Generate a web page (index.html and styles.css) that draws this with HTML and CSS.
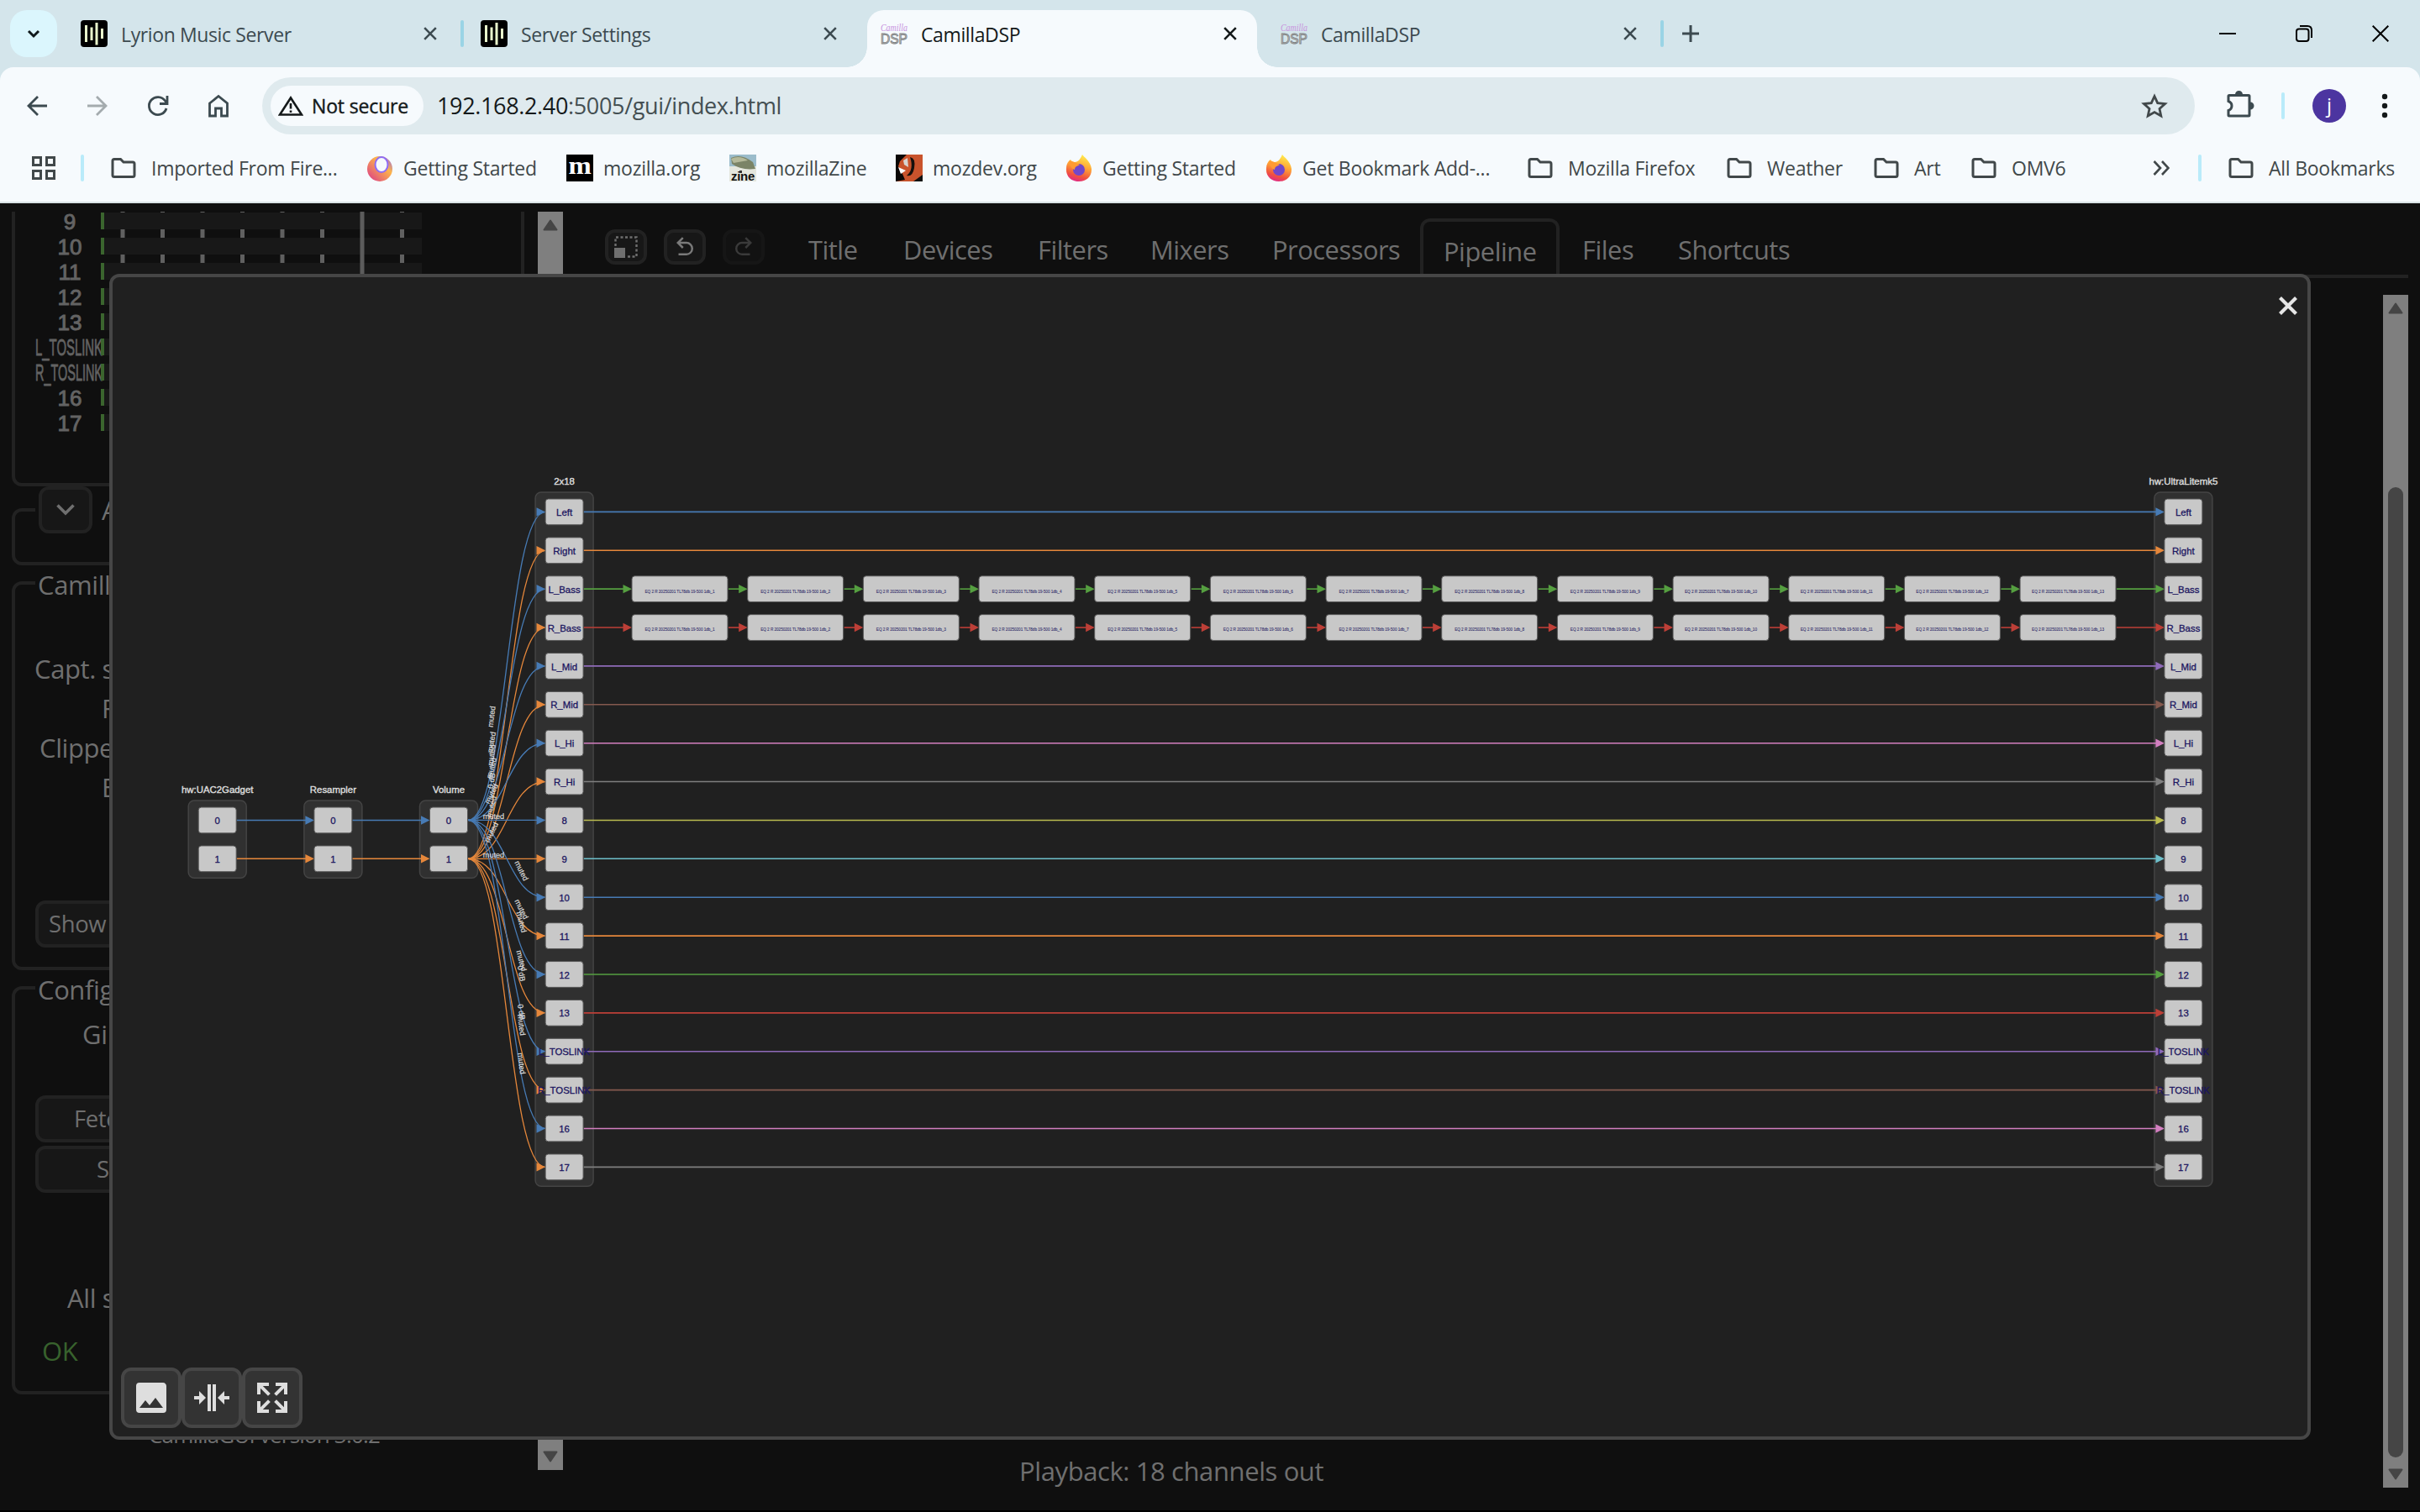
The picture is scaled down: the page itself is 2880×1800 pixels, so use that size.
FILE: index.html
```html
<!DOCTYPE html>
<html lang="en">
<head>
<meta charset="utf-8">
<title>CamillaDSP</title>
<link rel="stylesheet" href="styles.css">
</head>
<body>
<svg class="defs" aria-hidden="true">
  <symbol id="folder" viewBox="0 0 32 32"><path d="M3 7.500Q3 5.500 5 5.500H12.500L16 9H27Q29 9 29 11V24.500Q29 26.500 27 26.500H5Q3 26.500 3 24.500Z" fill="none" stroke="#41484a" stroke-width="3"/></symbol>
  <symbol id="close" viewBox="0 0 16 16"><path d="M1.200 1.200L14.800 14.800M14.800 1.200L1.200 14.800" fill="none" stroke="currentColor" stroke-width="2.600"/></symbol>
  <symbol id="lyrion" viewBox="0 0 32 32"><rect width="32" height="32" rx="4" fill="#000"/><path d="M6.500 6V26M13 8.500V24M19 3V29.500M25.500 10V22" stroke="#e8f5cb" stroke-width="3"/></symbol>
  <symbol id="firefox" viewBox="0 0 32 32"><path d="M20 0C22 3 30 8 31 17C31.500 26 25 32 16 32C7 32 0 26 1 16C1 12 3 8 6 6C7 8 9 9 11 9C15 9 18 5 20 0Z" fill="url(#fx)"/><circle cx="16" cy="18" r="7" fill="#7247c9"/><path d="M4 8C8 7 12 10 17 12C14 14 11 14 11 18C9 18 5 14 4 8Z" fill="#ff9b32"/></symbol>
  <linearGradient id="fx" x1=".7" y1="0" x2=".4" y2="1"><stop offset="0" stop-color="#fff04e"/><stop offset=".45" stop-color="#ffa436"/><stop offset=".8" stop-color="#f0503f"/><stop offset="1" stop-color="#e02b84"/></linearGradient>
  <linearGradient id="ring" x1="1" y1="0" x2="0" y2="1"><stop offset="0" stop-color="#8b5cf0"/><stop offset=".35" stop-color="#fdb54a"/><stop offset="1" stop-color="#d9348c"/></linearGradient>
</svg>

<header class="browser">
  <div class="tabstrip">
    <div class="tabsearch"><svg width="16" height="12" viewBox="0 0 16 12"><path d="M2 3L8 9L14 3" fill="none" stroke="#10191b" stroke-width="3"/></svg></div>
    <div class="tab first"><svg class="fav"><use href="#lyrion"/></svg><span>Lyrion Music Server</span><svg class="x"><use href="#close"/></svg></div>
    <i class="sep"></i>
    <div class="tab second"><svg class="fav"><use href="#lyrion"/></svg><span>Server Settings</span><svg class="x"><use href="#close"/></svg></div>
    <div class="tab active"><svg class="fav dsp" viewBox="0 0 32 32"><text class="script" x="0" y="12.500" textLength="32" lengthAdjust="spacingAndGlyphs">Camilla</text><text class="caps" x="0" y="28" textLength="32" lengthAdjust="spacingAndGlyphs">DSP</text></svg><span>CamillaDSP</span><svg class="x"><use href="#close"/></svg></div>
    <div class="tab fourth"><svg class="fav dsp" viewBox="0 0 32 32"><text class="script" x="0" y="12.500" textLength="32" lengthAdjust="spacingAndGlyphs">Camilla</text><text class="caps" x="0" y="28" textLength="32" lengthAdjust="spacingAndGlyphs">DSP</text></svg><span>CamillaDSP</span><svg class="x"><use href="#close"/></svg></div>
    <i class="sep"></i>
    <svg class="plus" width="22" height="22" viewBox="0 0 22 22"><path d="M11 1V21M1 11H21" stroke="#3c4a50" stroke-width="3"/></svg>
    <div class="winctl">
      <svg width="20" height="20" viewBox="0 0 20 20"><path d="M0 10H20" stroke="#000" stroke-width="2"/></svg>
      <svg width="20" height="20" viewBox="0 0 20 20"><rect x="1" y="4.500" width="14.500" height="14.500" rx="3" fill="none" stroke="#000" stroke-width="2"/><path d="M5 1H14Q19 1 19 6V15" fill="none" stroke="#000" stroke-width="2"/></svg>
      <svg width="20" height="20" viewBox="0 0 20 20"><path d="M.7 .7L19.300 19.300M19.300 .7L.7 19.300" stroke="#000" stroke-width="2"/></svg>
    </div>
  </div>

  <div class="toolbar">
    <div class="nav-icons">
      <svg viewBox="0 0 24 24"><path d="M24 12H2M13 1L2 12L13 23" fill="none" stroke="#3c4a50" stroke-width="2.800"/></svg>
      <svg viewBox="0 0 24 24"><path d="M0 12H22M11 1L22 12L11 23" fill="none" stroke="#a4abae" stroke-width="2.800"/></svg>
      <svg viewBox="0 0 24 24"><path d="M22 15A10.500 10.500 0 1 1 20.500 6L22.500 9M23 0V9.500H14" fill="none" stroke="#3c4a50" stroke-width="2.800"/></svg>
      <svg viewBox="0 0 24 26"><path d="M1.500 10L12 1.500L22.500 10V25H15.500V16H8.500V25H1.500Z" fill="none" stroke="#3c4a50" stroke-width="2.800"/></svg>
    </div>
    <div class="omnibox">
      <div class="chip"><svg width="30" height="24" viewBox="0 0 30 24"><path d="M15 2.500L28 22.500H2Z" fill="none" stroke="#14191a" stroke-width="2.600"/><path d="M15 9V15.500M15 17.500V20" stroke="#14191a" stroke-width="2.600"/></svg><span>Not secure</span></div>
      <div class="url"><b>192.168.2.40</b>:5005/gui/index.html</div>
      <svg class="star" width="32" height="30" viewBox="0 0 32 30"><path d="M16 3.500L19.700 11.600L28.600 12.600L22 18.500L23.800 27L16 22.600L8.200 27L10 18.500L3.400 12.600L12.300 11.600Z" fill="none" stroke="#41484a" stroke-width="2.800"/></svg>
    </div>
    <svg class="puzzle" width="34" height="32" viewBox="0 0 34 32"><path d="M3 6.500Q3 5.500 4 5.500H27Q28 5.500 28 6.500V29Q28 30 27 30H4Q3 30 3 29V23.500Q7 22 7 18Q7 14 3 12.500Z" fill="none" stroke="#3c4a50" stroke-width="3"/><path d="M11 4.500A4.500 4.500 0 0 1 20 4.500ZM29 13.500A4.500 4.500 0 0 1 29 22.500Z" fill="#3c4a50"/></svg>
    <i class="sep light"></i>
    <div class="avatar">j</div>
    <svg class="dots" width="8" height="30" viewBox="0 0 8 30"><g fill="#14191a"><circle cx="4" cy="4" r="3.200"/><circle cx="4" cy="15" r="3.200"/><circle cx="4" cy="26" r="3.200"/></g></svg>
  </div>

  <div class="bookmarks">
    <svg class="apps" viewBox="0 0 28 28"><path d="M1.500 1.500H10.500V10.500H1.500ZM17.500 1.500H26.500V10.500H17.500ZM1.500 17.500H10.500V26.500H1.500ZM17.500 17.500H26.500V26.500H17.500Z" fill="none" stroke="#41484a" stroke-width="3"/></svg>
    <i class="sep light"></i>
    <div><svg class="fav"><use href="#folder"/></svg>Imported From Fire...</div>
    <div><svg class="fav" viewBox="0 0 32 32"><ellipse cx="16" cy="17" rx="15" ry="15" fill="url(#ring)"/><ellipse cx="18" cy="12" rx="7.500" ry="9" fill="#f6fafd" stroke="#8f6cf5" stroke-width="2"/></svg>Getting Started</div>
    <div><svg class="fav open" viewBox="0 0 32 32"><rect width="32" height="32"/><text x="2.500" y="23" textLength="27" lengthAdjust="spacingAndGlyphs" font-family="Liberation Serif, serif" font-weight="bold" font-size="30" fill="#fff">m</text></svg>mozilla.org</div>
    <div><svg class="fav open" viewBox="0 0 32 32"><rect width="32" height="19" fill="#9bbccb"/><rect y="14" width="32" height="18" fill="#e4e6dd"/><path d="M2 4Q14 -2 28 9L31 17Q14 19 3 11Z" fill="#7b8467"/><path d="M2 5Q12 0 22 7L5 10Z" fill="#b4b99a"/><path d="M12 19H15V22H12Z" fill="#333"/><text x="2" y="31" textLength="28" lengthAdjust="spacingAndGlyphs" font-family="Liberation Sans, sans-serif" font-weight="bold" font-size="14" fill="#111">zine</text></svg>mozillaZine</div>
    <div><svg class="fav" viewBox="0 0 32 32"><rect width="32" height="32" fill="#c9532c"/><path d="M0 0H13L5 8L3 14L8 23L11 30L0 32Z" fill="#0b0706"/><path d="M17 3Q24 4 22 16Q20 27 13 25Q22 18 17 3Z" fill="#16100d"/><path d="M9 7L14 4L15 15L10 12Z" fill="#d8d4d0"/><path d="M3 15L12 19L6 23Z" fill="#fff"/><path d="M32 24L21 32H32Z" fill="#111"/></svg>mozdev.org</div>
    <div><svg class="fav"><use href="#firefox"/></svg>Getting Started</div>
    <div><svg class="fav"><use href="#firefox"/></svg>Get Bookmark Add-...</div>
    <div><svg class="fav"><use href="#folder"/></svg>Mozilla Firefox</div>
    <div><svg class="fav"><use href="#folder"/></svg>Weather</div>
    <div><svg class="fav"><use href="#folder"/></svg>Art</div>
    <div><svg class="fav"><use href="#folder"/></svg>OMV6</div>
    <svg class="more" viewBox="0 0 20 18"><path d="M1.500 1L9 9L1.500 17M11 1L18.500 9L11 17" fill="none" stroke="#41484a" stroke-width="2.600"/></svg>
    <i class="sep light"></i>
    <div><svg class="fav"><use href="#folder"/></svg>All Bookmarks</div>
  </div>
</header>

<main class="app">
  <aside class="side">
    <section class="panel levels"><svg id="meter" width="580" height="322" viewBox="18 252 580 322"></svg></section>
    <section class="panel shortcuts"><div class="legend"><button><svg width="22" height="14" viewBox="0 0 22 14"><path d="M1.500 1.500L11 11L20.500 1.500" fill="none" stroke="#6f6f6f" stroke-width="3.600"/></svg></button><span>A</span></div></section>
    <section class="panel status">
      <div class="legend">Camill</div>
      <p class="l1">Capt. s</p><p class="l2">F</p><p class="l3">Clippe</p><p class="l2">B</p>
      <button>Show</button>
    </section>
    <section class="panel config">
      <div class="legend">Config</div>
      <p class="git">Gi</p>
      <button class="fetch">Fetc</button>
      <button class="send">S</button>
      <p class="all">All s</p>
      <p class="ok">OK</p>
    </section>
    <footer>CamillaGUI version 3.0.2</footer>
  </aside>
  <div class="scroll left">
    <svg width="18" height="14" viewBox="0 0 18 14"><path d="M9 1.500L16.500 12.500H1.500Z" fill="#454545" stroke="#454545" stroke-width="2" stroke-linejoin="round"/></svg>
    <svg width="18" height="14" viewBox="0 0 18 14"><path d="M9 12.500L16.500 1.500H1.500Z" fill="#454545" stroke="#454545" stroke-width="2" stroke-linejoin="round"/></svg>
  </div>
  <div class="work">
    <nav>
      <button><svg width="28" height="26" viewBox="0 0 28 26"><path d="M1.500 12V1.500H26.500V24.500H15" fill="none" stroke="#6f6f6f" stroke-width="2.400" stroke-dasharray="3 2.500"/><rect x="0" y="14" width="13" height="12" fill="#6f6f6f"/></svg></button>
      <button><svg width="30" height="30" viewBox="0 0 24 24"><path fill="#7a7a7a" d="M13.500,7A6.500,6.500 0 0,1 20,13.500A6.500,6.500 0 0,1 13.500,20H6V18H13.500C16,18 18,16 18,13.500C18,11 16,9 13.500,9H7.830L10.910,12.090L9.500,13.500L4,8L9.500,2.500L10.920,3.910L7.830,7H13.500Z"/></svg></button>
      <button class="off"><svg width="30" height="30" viewBox="0 0 24 24"><path fill="#7a7a7a" d="M10.500,7A6.500,6.500 0 0,0 4,13.500A6.500,6.500 0 0,0 10.500,20H18V18H10.500C8,18 6,16 6,13.500C6,11 8,9 10.500,9H16.170L13.090,12.090L14.500,13.500L20,8L14.500,2.500L13.080,3.910L16.170,7H10.500Z"/></svg></button>
      <span>Title</span><span>Devices</span><span>Filters</span><span>Mixers</span><span>Processors</span><span class="current">Pipeline</span><span>Files</span><span>Shortcuts</span>
    </nav>
    <div class="pipeline-pane">
      <p>Playback: 18 channels out</p>
      <div class="scroll right">
        <svg width="18" height="14" viewBox="0 0 18 14"><path d="M9 1.500L16.500 12.500H1.500Z" fill="#454545" stroke="#454545" stroke-width="2" stroke-linejoin="round"/></svg>
        <div class="thumb"></div>
        <svg width="18" height="14" viewBox="0 0 18 14"><path d="M9 12.500L16.500 1.500H1.500Z" fill="#454545" stroke="#454545" stroke-width="2" stroke-linejoin="round"/></svg>
      </div>
    </div>
  </div>
</main>

<div class="dialog">
  <svg id="graph" width="2612" height="1380" viewBox="134 330 2612 1380"></svg>
  <svg class="dismiss" width="24" height="24" viewBox="0 0 24 24"><path d="M2.500 2.500L21.500 21.500M21.500 2.500L2.500 21.500" stroke="#e6e6e6" stroke-width="4.200"/></svg>
  <div class="tools">
    <button><svg width="48" height="48" viewBox="0 0 24 24"><path fill="#dedede" d="M8.500,13.500L11,16.500L14.500,12L19,18H5M21,19V5C21,3.890 20.100,3 19,3H5A2,2 0 0,0 3,5V19A2,2 0 0,0 5,21H19A2,2 0 0,0 21,19Z"/></svg></button>
    <button><svg width="48" height="48" viewBox="0 0 48 48"><path fill="#dedede" d="M19 8H23V40H19ZM25 8H29V40H25ZM3 22H9V16L17 24L9 32V26H3ZM45 22H39V16L31 24L39 32V26H45Z"/></svg></button>
    <button><svg width="48" height="48" viewBox="0 0 24 24"><path fill="#dedede" d="M9.500,13.090L10.910,14.500L6.410,19H10V21H3V14H5V17.590L9.500,13.090M10.910,9.500L9.500,10.910L5,6.410V10H3V3H10V5H6.410L10.910,9.500M14.500,13.090L19,17.590V14H21V21H14V19H17.590L13.090,14.500L14.500,13.090M13.090,9.500L17.590,5H14V3H21V10H19V6.410L14.500,10.910L13.090,9.500Z"/></svg></button>
  </div>
</div>
<script src="graph.js"></script>
</body>
</html>
```
FILE: styles.css
```css
* { box-sizing: border-box; }
html, body { height: 1800px; }
body { margin: 0; width: 2880px; overflow: hidden; background: #000; font-family: "Open Sans", "Noto Sans", sans-serif; display: flex; flex-direction: column; position: relative; }
svg { display: block; flex: none; }
p { margin: 0; }
button { font: inherit; letter-spacing: inherit; color: inherit; margin: 0; padding: 0; }
.defs { position: absolute; width: 0; height: 0; }

.browser { height: 242px; background: #d4e5eb; border-bottom: 2px solid #d9e3e5; flex: none; }
.fav { width: 32px; height: 32px; }
.fav.open, .dsp { overflow: visible; }
.dsp { letter-spacing: 0; }
.dsp .script { font: italic 13px "Liberation Serif", serif; fill: #c893dd; }
.dsp .caps { font: 17px "Liberation Sans", sans-serif; fill: #e9e9e9; stroke: #7f8283; stroke-width: 1px; }
.sep { width: 4px; height: 32px; background: #9ad4e5; border-radius: 2px; flex: none; }
.sep.light { background: #b9ebfa; }

.tabstrip { height: 80px; display: flex; align-items: center; padding-left: 12px; font-size: 23px; letter-spacing: -.38px; color: #3c4a50; }
.tabsearch { width: 56px; height: 56px; border-radius: 20px; background: #dbf6fd; display: flex; align-items: center; justify-content: center; }
.tab { height: 56px; display: flex; align-items: center; flex: none; }
.tab span { flex: 1; padding-left: 16px; padding-top: 2px; }
.tab .x { width: 16px; height: 16px; }
.tab.first { width: 424px; margin-left: 28px; margin-right: 28px; }
.tab.second { width: 424px; margin-left: 20px; margin-right: 36px; }
.tab.active { width: 464px; height: 68px; align-self: flex-end; background: #f6fafd; border-radius: 20px 20px 0 0; padding: 0 24px 12px 16px; color: #14191a; position: relative; }
.tab.active::before, .tab.active::after { content: ""; position: absolute; bottom: 0; width: 24px; height: 24px; }
.tab.active::before { left: -24px; background: radial-gradient(circle at 0 0, #d4e5eb 23.5px, #f6fafd 24px); }
.tab.active::after { right: -24px; background: radial-gradient(circle at 100% 0, #d4e5eb 23.5px, #f6fafd 24px); }
.tab.fourth { width: 424px; margin-left: 28px; margin-right: 28px; }
.plus { margin-left: 21px; }
.winctl { margin-left: auto; margin-right: 37px; display: flex; gap: 71px; }

.toolbar { height: 80px; background: #f6fafd; border-radius: 16px 16px 0 0; display: flex; align-items: center; padding: 12px 0 0 32px; }
.nav-icons { display: flex; gap: 48px; width: 280px; }
.nav-icons svg { width: 24px; height: 26px; overflow: visible; }
.omnibox { width: 2300px; height: 68px; border-radius: 34px; background: #dfeaee; display: flex; align-items: center; padding: 0 32px 0 10px; }
.chip { width: 182px; height: 48px; border-radius: 24px; background: #f6fafd; display: flex; align-items: center; gap: 10px; padding-left: 9px; padding-bottom: 1px; font-size: 23px; letter-spacing: -.15px; color: #14191a; -webkit-text-stroke: .4px #14191a; white-space: nowrap; }
.url { flex: 1; padding-left: 16px; padding-bottom: 1px; font-size: 27px; letter-spacing: -.35px; color: #444f52; }
.url b { font-weight: 400; color: #14191a; }
.puzzle { margin: -4px 32px 0 37px; }
.avatar { width: 40px; height: 40px; margin: 0 0 0 33px; border-radius: 50%; background: #4c35a0; color: #fff; font-size: 24px; line-height: 37px; text-align: center; }
.dots { margin-left: 42px; }

.bookmarks { height: 80px; background: #f6fafd; display: grid; align-items: center; color: #41484a; font-size: 23px; letter-spacing: -.25px; white-space: nowrap; padding-left: 38px;
  grid-template-columns: 58px 36px 304px 238px 194px 198px 202px 238px 312px 237px 175px 116px 216px 54px 36px 200px; }
.bookmarks > div { display: flex; align-items: center; gap: 12px; }
.bookmarks > div:nth-child(n+10), .bookmarks > div:nth-child(3) { gap: 17px; margin-left: -1px; }
.apps { width: 28px; height: 28px; }
.more { width: 20px; height: 18px; }

.app { height: 1556px; background: #0f0f0f; color: #6f6f6f; display: flex; padding: 10px 14px 0; font-size: 31px; letter-spacing: -.4px; line-height: 46px; flex: none; }
.side { width: 610px; display: flex; flex-direction: column; flex: none; }
.panel { border: 4px solid #222; border-radius: 12px; position: relative; flex: none; }
.panel button, nav button { border: 4px solid #222; border-radius: 12px; background: #171717; }
.legend { position: absolute; left: 24px; top: -22px; padding: 0 5px 0 3px; background: #0f0f0f; line-height: 44px; }
.levels { height: 327px; border-top: 0; border-radius: 0 0 12px 12px; }
.levels svg { width: 580px; }
.shortcuts { height: 68px; margin-top: 26px; }
.shortcuts .legend { top: -30px; display: flex; align-items: center; gap: 11px; padding-left: 4px; height: 56px; }
.shortcuts .legend button { width: 64px; height: 56px; display: flex; align-items: center; justify-content: center; }
.status { height: 463px; margin-top: 19px; padding: 77px 24px 0 23px; }
.status p { height: 47px; }
.status .l1 { padding-left: 0; }
.status .l2 { padding-left: 80px; }
.status .l3 { padding-left: 6px; }
.panel > button { display: block; width: 520px; height: 56px; text-align: left; font-size: 27.500px; line-height: 44px; padding-left: 13px; }
.status > button { margin-left: 1px; padding-left: 12px; margin-top: 111px; }
.config { height: 486px; margin-top: 19px; padding: 30px 24px 0; }
.config .git { padding-left: 56px; height: 96px; }
.config > .fetch { padding-left: 42px; }
.config > .send { margin-top: 4px; padding-left: 69px; }
.config .all { padding: 102px 0 0 38px; }
.config .ok { padding: 17px 0 0 8px; color: #38622d; }
.side footer { padding: 28px 0 0 163px; line-height: 40px; font-size: 26px; letter-spacing: -.82px; }

.scroll { width: 30px; background: #7f7f7f; display: flex; flex-direction: column; align-items: center; justify-content: space-between; flex: none; }
.scroll.left { margin-left: 16px; height: 1498px; padding: 9px 0; }
.work { flex: 1; padding-left: 50px; display: flex; flex-direction: column; }
nav { height: 79px; display: grid; align-items: start; padding-top: 8px; white-space: nowrap; border-bottom: 4px solid #222; font-size: 30.800px; letter-spacing: -.45px;
  grid-template-columns: 70px 70px 102px 113px 160px 134px 145px 176px 193px 114px 150px; }
nav button { width: 50px; height: 42px; margin-top: 13px; display: flex; align-items: center; justify-content: center; }
nav button.off { opacity: .4; }
nav span { padding-top: 14px; }
nav .current { padding: 12px 0 0 24px; width: 166px; height: 71px; border: 4px solid #222; border-bottom: 0; border-radius: 12px 12px 0 0; }
.pipeline-pane { height: 1459px; display: flex; justify-content: space-between; padding-top: 20px; padding-left: 493px; }
.pipeline-pane p { align-self: flex-end; padding-bottom: 16px; }
.scroll.right { height: 1420px; padding: 9px 0; }
.thumb { width: 18px; height: 1155px; margin-top: auto; margin-bottom: 13px; border-radius: 9px; background: #454545; }

.dialog { position: absolute; left: 130px; top: 326px; width: 2620px; height: 1388px; border: 4px solid #464646; border-radius: 12px; background: #202020; overflow: hidden; }
.dismiss { position: absolute; right: 11px; top: 22px; }
.tools { position: absolute; left: 10px; bottom: 10px; display: flex; }
.tools button { width: 72px; height: 72px; border: 4px solid #464646; border-radius: 12px; background: #333; display: flex; align-items: center; justify-content: center; }
#graph { font-family: "Liberation Sans", Arial, sans-serif; font-size: 11.400px; }
#graph .heading { fill: #dcdcdc; stroke: #dcdcdc; stroke-width: .4px; }
#graph .group { fill: #303030; stroke: #444; stroke-width: 1.500px; }
#graph .node { fill: #c8c8c8; stroke: #555; stroke-width: 1px; }
#graph .name { fill: #1b1560; stroke: #1b1560; stroke-width: .3px; }
#graph .filter { fill: #3a3670; font-size: 4.700px; stroke: #3a3670; stroke-width: .1px; }
#graph .gain { fill: #dcdcdc; stroke: #dcdcdc; stroke-width: .2px; font-size: 9.100px; }
#meter { font-family: "Liberation Sans", Arial, sans-serif; font-size: 26px; letter-spacing: 0; }
```
FILE: graph.js
```javascript
const NS = 'http://www.w3.org/2000/svg';
function add(parent, tag, attrs, text) {
  const el = document.createElementNS(NS, tag);
  for (const k in attrs) el.setAttribute(k, attrs[k]);
  if (text !== undefined) el.textContent = text;
  parent.appendChild(el);
  return el;
}

// Level meter rows
const meter = document.getElementById('meter');
const ticks = [146, 193.5, 241, 288.5, 336, 383.5, 478.5];
const channels = ['9', '10', '11', '12', '13', 'L_TOSLINK', 'R_TOSLINK', '16', '17'];
ticks.forEach(x => add(meter, 'rect', { x: x - 2.5, y: 252, width: 5, height: 260, fill: '#606060' }));
channels.forEach((name, i) => {
  const y = 253 + i * 30;
  add(meter, 'rect', { x: 120, y, width: 382, height: 20, fill: '#181818' });
  const long = name.length > 2;
  const t = { x: long ? 42 : 83, y: y + 19.5, fill: '#636363', stroke: '#636363' };
  if (long) Object.assign(t, { textLength: 80, lengthAdjust: 'spacingAndGlyphs', 'font-size': 27, 'stroke-width': 0.8 });
  else Object.assign(t, { 'text-anchor': 'middle', 'stroke-width': 1 });
  add(meter, 'text', t, name);
  add(meter, 'rect', { x: 120, y, width: 4, height: 20, fill: '#3b652e' });
});
add(meter, 'rect', { x: 428.5, y: 252, width: 5, height: 260, fill: '#5c5c5c' });

// Pipeline graph
const g = document.getElementById('graph');
const palette = ['#477bb5', '#e5873b', '#559f40', '#bd3f37', '#8f6bb9', '#84594e', '#d37fc0', '#7f7f7f', '#bcbd50', '#6ebfca'];
const names = ['Left', 'Right', 'L_Bass', 'R_Bass', 'L_Mid', 'R_Mid', 'L_Hi', 'R_Hi', '8', '9', '10', '11', '12', '13', 'L_TOSLINK', 'R_TOSLINK', '16', '17'];
const rowY = i => 609.4 + i * 45.88;
const IN = 258.7, RES = 396.4, VOL = 534, MIX = 671.6, OUT = 2598.4;

function group(cx, title, first, count) {
  add(g, 'rect', { class: 'group', x: cx - 34.5, y: rowY(first) - 23.5, width: 69, height: 46.5 + 45.88 * (count - 1), rx: 7 });
  add(g, 'text', { class: 'heading', x: cx, y: rowY(first) - 32.5, 'text-anchor': 'middle' }, title);
}
function node(cx, i, name, w = 45) {
  add(g, 'rect', { class: 'node', x: cx - w / 2, y: rowY(i) - 15.4, width: w, height: 30.8, rx: 3.5 });
  if (w > 50) add(g, 'text', { class: 'filter', x: cx, y: rowY(i) + 4.4, 'text-anchor': 'middle', textLength: name.length > 35 ? 86 : 83 }, name);
  else add(g, 'text', { class: 'name', x: cx, y: rowY(i) + 4.6, 'text-anchor': 'middle' }, name);
}
function arrow(x, y, color) {
  add(g, 'path', { d: `M${x} ${y}l-10.500 -5.200v10.400z`, fill: color });
}
function link(x0, x1, i, color) {
  const y = rowY(i);
  add(g, 'path', { d: `M${x0} ${y}H${x1 - 9}`, stroke: color, 'stroke-width': 1.6 });
  arrow(x1, y, color);
}

group(IN, 'hw:UAC2Gadget', 8, 2);
group(RES, 'Resampler', 8, 2);
group(VOL, 'Volume', 8, 2);
group(MIX, '2x18', 0, 18);
group(OUT, 'hw:UltraLitemk5', 0, 18);

for (let c = 0; c < 2; c++) {
  link(IN + 23, RES - 22.5, 8 + c, palette[c]);
  link(RES + 23, VOL - 22.5, 8 + c, palette[c]);
}
names.forEach((n, i) => {
  const c = i % 2, y0 = rowY(8 + c), y1 = rowY(i);
  add(g, 'path', { d: `M557 ${y0}C603 ${y0} 603 ${y1} 649 ${y1}`, fill: 'none', stroke: palette[c], 'stroke-width': 1.3 });
  arrow(649, y1, palette[c]);
});
names.forEach((n, i) => {
  const color = palette[i % 10];
  if (i === 2 || i === 3) {
    for (let f = 0; f < 13; f++) {
      const cx = 809 + f * 137.67;
      link(f ? cx - 137.67 + 58 : MIX + 23, cx - 57, i, color);
    }
    link(2519, OUT - 22.5, i, color);
  } else link(MIX + 23, OUT - 22.5, i, color);
});
[IN, RES, VOL].forEach(x => { node(x, 8, '0'); node(x, 9, '1'); });
names.forEach((n, i) => { node(MIX, i, n); node(OUT, i, n); });
for (let i = 2; i < 4; i++)
  for (let f = 0; f < 13; f++) node(809 + f * 137.67, i, 'EQ 2 R 20250201 TL78db 19-500 1db_' + (f + 1), 114);

// Gain labels beside each mixer connection
names.forEach((n, i) => {
  const y0 = rowY(8 + i % 2), dy = rowY(i) - y0;
  const x = dy === 0 ? 587.5 : dy < 0 ? 585 : 620.5;
  const y = y0 + dy / 2 + Math.abs(dy) / 6 + (dy === 0 ? -4 : -1);
  const a = Math.atan2(2 * dy, 92) * 180 / Math.PI;
  add(g, 'text', { class: 'gain', 'text-anchor': 'middle', transform: `translate(${x} ${y}) rotate(${a})`, y: 3 }, [3, 14, 15].includes(i) ? '0 dB' : 'muted');
});
```
